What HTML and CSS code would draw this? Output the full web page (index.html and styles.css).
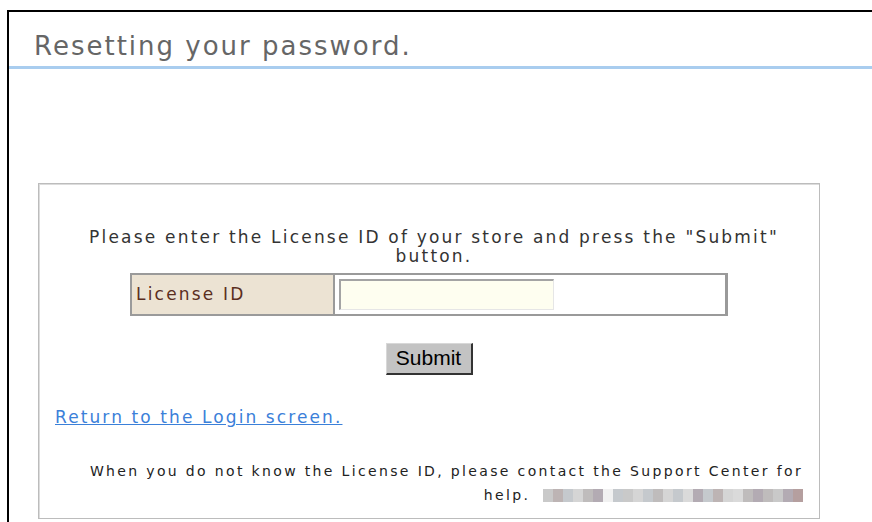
FILE: index.html
```html
<!DOCTYPE html>
<html lang="en">
<head>
<meta charset="utf-8">
<title>Resetting your password.</title>
<link rel="stylesheet" href="styles.css">
</head>
<body>
<div class="frame">
  <h1 class="page-title">Resetting your password.</h1>
  <div class="panel">
    <p class="intro">Please enter the License ID of your store and press the "Submit"<br>button.</p>
    <form class="license-form" onsubmit="return false;">
      <div class="license-row">
        <label class="license-label" for="license-id">License ID</label>
        <div class="license-field"><input id="license-id" class="license-input" type="text"></div>
      </div>
      <div class="actions"><button type="submit" class="submit-btn">Submit</button></div>
    </form>
    <a class="back-link" href="#">Return to the Login screen.</a>
    <p class="help-note">When you do not know the License ID, please contact the Support Center for<br>help. <span class="masked"><span class="px c1"></span><span class="px c2"></span><span class="px c3"></span><span class="px c4"></span><span class="px c5"></span><span class="px c6"></span><span class="px c7"></span><span class="px c3"></span><span class="px c1"></span><span class="px c4"></span><span class="px c3"></span><span class="px c5"></span><span class="px c4"></span><span class="px c3"></span><span class="px c8"></span><span class="px c6"></span><span class="px c3"></span><span class="px c2"></span><span class="px c4"></span><span class="px c8"></span><span class="px c5"></span><span class="px c6"></span><span class="px c5"></span><span class="px c1"></span><span class="px c6"></span><span class="px c9"></span></span></p>
  </div>
</div>
</body>
</html>
```
FILE: styles.css
```css
html, body {
  margin: 0;
  padding: 0;
  background: #fff;
}

body {
  font-family: "DejaVu Sans", Verdana, sans-serif;
  color: #333;
  overflow: hidden;
}

.frame {
  margin: 10px 0 0 7px;
  border-top: 2px solid #000;
  border-left: 2px solid #000;
  height: 520px;
  box-sizing: border-box;
}

.page-title {
  margin: 0;
  height: 57px;
  box-sizing: border-box;
  padding: 20px 0 0 25px;
  font-size: 26px;
  font-weight: normal;
  letter-spacing: 2px;
  line-height: 28px;
  color: #666;
  border-bottom: 3px solid #a9cdef;
}

.panel {
  margin: 114px 0 0 29px;
  width: 782px;
  height: 336px;
  box-sizing: border-box;
  border: 1px solid #bcbcbc;
  box-shadow: inset 1px 1px 0 #dcdcdc;
  padding: 44px 16px 0 16px;
}

.intro {
  margin: 0;
  padding-left: 10px;
  text-align: center;
  font-size: 17px;
  letter-spacing: 2.2px;
  line-height: 19px;
}

.license-form {
  margin: 7px 0 0 0;
}

.license-row {
  display: grid;
  grid-template-columns: 203px 1fr;
  width: 598px;
  height: 43px;
  margin: 0 auto;
  box-sizing: border-box;
  border: 2px solid #9a9a9a;
  border-right-width: 3px;
}

.license-label {
  background: #ece3d3;
  border-right: 2px solid #9a9a9a;
  color: #5b2e1e;
  font-size: 17px;
  letter-spacing: 2.2px;
  line-height: 39px;
  padding-left: 4px;
}

.license-field {
  padding: 4px 4px;
  background: #fff;
}

.license-input {
  display: block;
  width: 215px;
  height: 31px;
  box-sizing: border-box;
  margin: 0;
  padding: 0 3px;
  background: #fefef0;
  border-style: solid;
  border-width: 2px 1px 1px 2px;
  border-color: #a4a4a4 #e6e6e6 #e6e6e6 #a4a4a4;
  font: 16px "DejaVu Sans", Verdana, sans-serif;
}

.actions {
  display: flex;
  justify-content: center;
  margin-top: 27px;
}

.submit-btn {
  width: 87px;
  height: 32px;
  box-sizing: border-box;
  margin: 0;
  padding: 0 0 1px 0;
  background: #c3c3c3;
  border-style: solid;
  border-width: 1px 2px 2px 1px;
  border-color: #d8d8d8 #333 #333 #d8d8d8;
  color: #000;
  font: 21px "Liberation Sans", Arial, sans-serif;
}

.back-link {
  display: inline-block;
  margin: 32px 0 0 0;
  color: #3b80d9;
  font-size: 17px;
  letter-spacing: 2.1px;
  line-height: 20px;
  text-decoration: underline;
}

.help-note {
  margin: 32px 0 0 0;
  text-align: right;
  font-size: 14px;
  line-height: 24px;
  letter-spacing: 2.35px;
  color: #222;
}

/* contact details shown pixelated */
.masked {
  display: inline-flex;
  vertical-align: -2px;
  margin-left: 6px;
}

.px {
  display: inline-block;
  width: 10px;
  height: 13px;
}

.c1 { background: #c9c9c9; }
.c2 { background: #bdb4b4; }
.c3 { background: #c5c9cd; }
.c4 { background: #d5d5d5; }
.c5 { background: #bfbcbc; }
.c6 { background: #b3abb3; }
.c7 { background: #f1f1f1; }
.c8 { background: #dadada; }
.c9 { background: #b59f9f; }
```
